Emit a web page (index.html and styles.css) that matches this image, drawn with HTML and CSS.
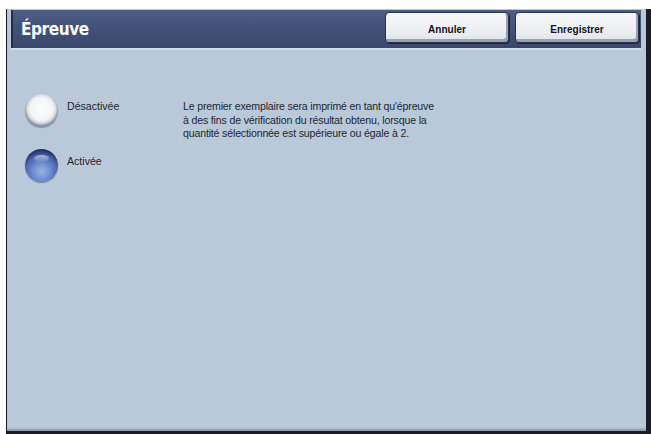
FILE: index.html
```html
<!DOCTYPE html>
<html lang="fr">
<head>
<meta charset="utf-8">
<title>Épreuve</title>
<link rel="stylesheet" href="styles.css">
</head>
<body>
<div class="screen">
  <header class="header">
    <h1 class="title">Épreuve</h1>
    <div class="actions">
      <button class="btn">Annuler</button>
      <button class="btn">Enregistrer</button>
    </div>
  </header>
  <main class="content">
    <div class="options">
      <div class="option">
        <span class="radio radio-off"></span>
        <span class="label">Désactivée</span>
      </div>
      <div class="option">
        <span class="radio radio-on"></span>
        <span class="label">Activée</span>
      </div>
    </div>
    <p class="desc">Le premier exemplaire sera imprimé en tant qu'épreuve<br>à des fins de vérification du résultat obtenu, lorsque la<br>quantité sélectionnée est supérieure ou égale à 2.</p>
  </main>
</div>
</body>
</html>
```
FILE: styles.css
```css
html, body {
  margin: 0;
  padding: 0;
  background: #ffffff;
}
body {
  font-family: "Liberation Sans", Arial, sans-serif;
  color: #1c1f2a;
}
.screen {
  box-sizing: border-box;
  margin: 9px 0 0 6px;
  width: 645px;
  height: 425px;
  background: #b9c9da;
  border-left: 1px solid #1a1c26;
  border-right: 5px solid #1a1c26;
  border-bottom: 3px solid #1a1c26;
  box-shadow: inset 0 -3px 2px -1px #8d9aab;
  display: flex;
  flex-direction: column;
}
.header {
  box-sizing: border-box;
  margin: 1px 5px 0 4px;
  height: 38px;
  background: linear-gradient(to bottom, #4e5d84 0%, #435279 45%, #3b486c 100%);
  border-left: 2px solid #252d47;
  box-shadow: 0 2px 0 #d2dce7;
  display: flex;
  align-items: flex-start;
  justify-content: space-between;
  padding-right: 2px;
}
.title {
  margin: 0;
  padding: 8px 0 0 8px;
  font-family: "DejaVu Sans Condensed", "DejaVu Sans", sans-serif;
  font-stretch: condensed;
  font-weight: bold;
  font-size: 17px;
  line-height: 22px;
  color: #ffffff;
  letter-spacing: -0.4px;
}
.actions {
  display: flex;
  gap: 6px;
  padding-top: 2px;
}
.btn {
  box-sizing: border-box;
  width: 124px;
  height: 31px;
  border: 1px solid #2a3250;
  border-radius: 4px;
  background: linear-gradient(to bottom, #f7f8fa 0%, #eceef2 60%, #dfe3e9 100%);
  box-shadow: inset -2px -3px 0 #9aa3b4, 1px 1px 0 #1f2640;
  font-family: "Liberation Sans", Arial, sans-serif;
  font-weight: bold;
  font-size: 10px;
  color: #111318;
  padding: 3px 0 0 0;
}
.content {
  flex: 1;
  display: flex;
  align-items: flex-start;
  padding: 46px 0 0 18px;
}
.options {
  width: 158px;
  display: flex;
  flex-direction: column;
  gap: 22px;
}
.option {
  display: flex;
  align-items: flex-start;
}
.label {
  margin-left: 9px;
  padding-top: 5px;
  font-size: 10.6px;
  line-height: 14px;
  color: #23262f;
}
.radio {
  position: relative;
  box-sizing: border-box;
  width: 33px;
  height: 33px;
  border-radius: 50%;
  flex: none;
}
.radio-off {
  background: radial-gradient(circle at 50% 45%, #fdfdfd 0%, #f3f4f6 46%, #d8dce2 58%, #98a0ad 67%, #5f6979 80%, #7d8696 92%, #a3abb8 100%);
  box-shadow: 0 1px 1px rgba(40, 50, 70, 0.35);
}
.radio-on {
  background: radial-gradient(circle at 50% 68%, #9ab3e6 0%, #6a88cc 35%, #4a64aa 58%, #2a3a74 72%, #16204a 86%, #2b3660 100%);
  box-shadow: 0 1px 1px rgba(20, 30, 60, 0.45);
}
.radio-on::after {
  content: "";
  position: absolute;
  left: 9px;
  top: 6px;
  width: 15px;
  height: 7px;
  border-radius: 50%;
  background: linear-gradient(to bottom, rgba(255, 255, 255, 0.55), rgba(255, 255, 255, 0));
}
.desc {
  margin: 6px 0 0 0;
  font-size: 10.6px;
  line-height: 13.7px;
  letter-spacing: -0.17px;
  color: #23262f;
}
```
